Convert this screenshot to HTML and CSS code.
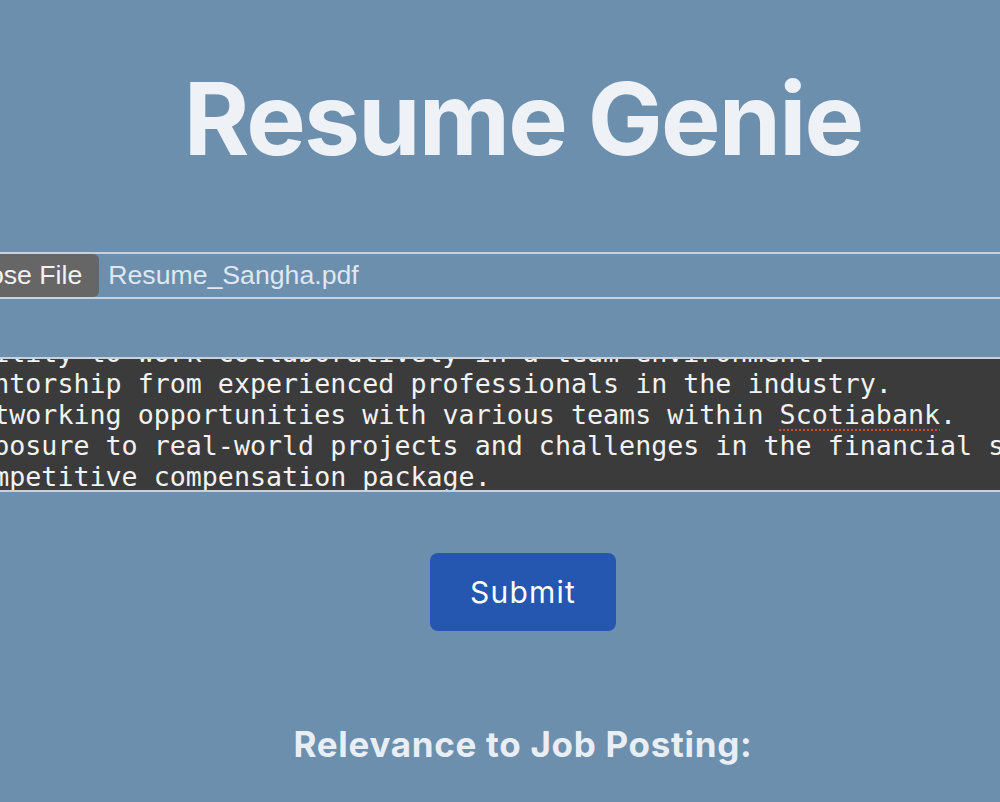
FILE: index.html
```html
<!DOCTYPE html>
<html lang="en">
<head>
<meta charset="utf-8">
<title>Resume Genie</title>
<link rel="stylesheet" href="styles.css">
</head>
<body>
<div class="page">
  <h1 class="title">Resume Genie</h1>
  <form class="form">
    <div class="file-row">
      <span class="file-btn">Choose File</span>
      <span class="file-name">Resume_Sangha.pdf</span>
    </div>
    <div class="textarea">
      <div class="textarea-content">- Ability to work collaboratively in a team environment.
- Mentorship from experienced professionals in the industry.
- Networking opportunities with various teams within <span class="misspelled">Scotiabank</span>.
- Exposure to real-world projects and challenges in the financial sector.
- Competitive compensation package.</div>
    </div>
    <button type="button" class="submit">Submit</button>
  </form>
  <h2 class="relevance">Relevance to Job Posting:</h2>
</div>
</body>
</html>
```
FILE: styles.css
```css
html, body {
  margin: 0;
  padding: 0;
}
body {
  background: #6c8fae;
  overflow: hidden;
  height: 802px;
  font-family: "Inter", "Liberation Sans", sans-serif;
}
.page {
  width: 1046px;
  display: flex;
  flex-direction: column;
  align-items: center;
}
.title {
  margin: 59px 0 0;
  font-family: "Inter", sans-serif;
  font-weight: 700;
  font-size: 100px;
  line-height: 120px;
  color: #eef2f7;
  letter-spacing: -1.8px;
}
.form {
  align-self: stretch;
  display: flex;
  flex-direction: column;
  align-items: center;
}
.file-row {
  align-self: flex-start;
  margin: 73px 0 0 -80px;
  width: 1300px;
  display: flex;
  align-items: center;
  gap: 9px;
  border-top: 2px solid #c7d2dc;
  border-bottom: 2px solid #c7d2dc;
  font-family: "Liberation Sans", Arial, sans-serif;
  font-size: 26.67px;
  height: 43px;
}
.file-btn {
  background: #666666;
  color: #f2f2f2;
  height: 43px;
  line-height: 43px;
  padding: 0 17px 0 20px;
  border-radius: 6px;
  box-sizing: border-box;
}
.file-name {
  color: #dfe7f0;
}
.textarea {
  align-self: flex-start;
  margin: 58px 0 0 -92px;
  width: 1300px;
  height: 131px;
  overflow: hidden;
  background: #3b3b3b;
  border-top: 2px solid #c7d2dc;
  border-bottom: 2px solid #c7d2dc;
}
.textarea-content {
  margin: -22.5px 0 0 0;
  padding-left: 21px;
  white-space: pre;
  font-family: "DejaVu Sans Mono", monospace;
  font-size: 26.67px;
  line-height: 31px;
  color: #f2f2f2;
}
.misspelled {
  text-decoration: underline dotted #d0463c;
  text-underline-offset: 6px;
  text-decoration-thickness: 2px;
}
.submit {
  margin-top: 61px;
  width: 186px;
  height: 78px;
  border: none;
  border-radius: 8px;
  background: #2556b0;
  color: #ffffff;
  font-family: "Inter", sans-serif;
  font-size: 30px;
  font-weight: 400;
  letter-spacing: 1.2px;
  padding: 0;
}
.relevance {
  margin: 93px 0 0;
  font-family: "Inter", sans-serif;
  font-weight: 700;
  font-size: 35px;
  line-height: 40px;
  letter-spacing: 0.7px;
  color: #e9eef5;
}
```
